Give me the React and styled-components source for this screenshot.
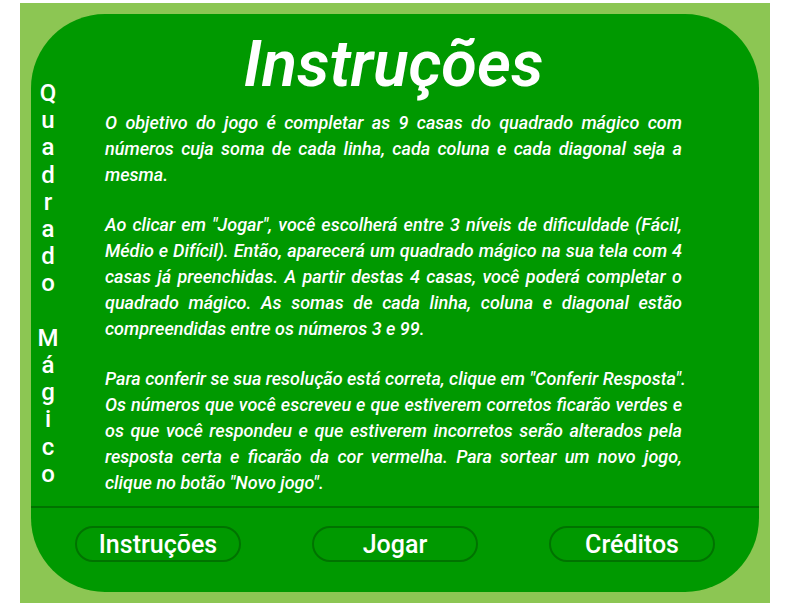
import React from "react";
import styled, { createGlobalStyle } from "styled-components";

const GlobalStyle = createGlobalStyle`
  * { box-sizing: border-box; }
  html, body, #root { height: 100%; }
  body {
    margin: 0;
    background: #ffffff;
    color: #ffffff;
    font-family: Roboto, "Liberation Sans", sans-serif;
    font-weight: 500;
  }
`;

const Page = styled.div`
  display: flex;
  min-height: 100%;
  padding: 3px 15px 1px 20px;
`;

const Frame = styled.div`
  display: flex;
  flex: 1;
  min-width: 0;
  padding: 11px;
  background: #8cc653;
`;

const Panel = styled.div`
  display: flex;
  flex: 1;
  flex-direction: column;
  min-width: 0;
  border-radius: 74px;
  background: #009900;
`;

const Body = styled.div`
  display: grid;
  flex: 1;
  grid-template-columns: 34px minmax(0, 1fr);
  border-bottom: 2px solid #007300;
`;

const SideTitle = styled.div`
  display: flex;
  flex-direction: column;
  margin: 66px 0 18px;
  font-size: 24px;
  line-height: 27px;
  text-align: center;
`;

const Letter = styled.span`
  flex: 1;
`;

const Content = styled.main`
  padding: 14px 77px 8px 40px;
`;

const Title = styled.h1`
  margin: 0 0 10px;
  font-size: 65px;
  font-style: italic;
  font-weight: 600;
  line-height: 72px;
  text-align: center;
`;

const Instructions = styled.div`
  display: grid;
  grid-template-columns: minmax(0, 1fr);
  gap: 24px;
  font-size: 18px;
  font-style: italic;
  line-height: 26px;
`;

const Paragraph = styled.p`
  margin: 0;
`;

const Line = styled.span`
  display: block;
  text-align-last: justify;
  white-space: nowrap;

  &:last-child { text-align-last: left; }
`;

const Menu = styled.nav`
  display: flex;
  justify-content: space-between;
  padding: 18px 44px 30px;
`;

const MenuButton = styled.button`
  width: 166px;
  height: 36px;
  padding: 2px 0 0;
  border: 2px solid #007300;
  border-radius: 20px;
  background: transparent;
  color: inherit;
  font: inherit;
  font-size: 25px;
  line-height: 30px;
  cursor: pointer;
`;

const name = "Quadrado Mágico";

const paragraphs = [
  [
    "O objetivo do jogo é completar as 9 casas do quadrado mágico com",
    "números cuja soma de cada linha, cada coluna e cada diagonal seja a",
    "mesma.",
  ],
  [
    'Ao clicar em "Jogar", você escolherá entre 3 níveis de dificuldade (Fácil,',
    "Médio e Difícil). Então, aparecerá um quadrado mágico na sua tela com 4",
    "casas já preenchidas. A partir destas 4 casas, você poderá completar o",
    "quadrado mágico. As somas de cada linha, coluna e diagonal estão",
    "compreendidas entre os números 3 e 99.",
  ],
  [
    'Para conferir se sua resolução está correta, clique em "Conferir Resposta".',
    "Os números que você escreveu e que estiverem corretos ficarão verdes e",
    "os que você respondeu e que estiverem incorretos serão alterados pela",
    "resposta certa e ficarão da cor vermelha. Para sortear um novo jogo,",
    'clique no botão "Novo jogo".',
  ],
];

const menu = ["Instruções", "Jogar", "Créditos"];

export default function App() {
  return (
    <>
      <GlobalStyle />
      <Page>
        <Frame>
          <Panel>
            <Body>
              <SideTitle>
                {[...name].map((letter, i) => (
                  <Letter key={i}>{letter}</Letter>
                ))}
              </SideTitle>
              <Content>
                <Title>Instruções</Title>
                <Instructions>
                  {paragraphs.map((lines) => (
                    <Paragraph key={lines[0]}>
                      {lines.map((line) => (
                        <Line key={line}>{line} </Line>
                      ))}
                    </Paragraph>
                  ))}
                </Instructions>
              </Content>
            </Body>
            <Menu>
              {menu.map((label) => (
                <MenuButton key={label} type="button">{label}</MenuButton>
              ))}
            </Menu>
          </Panel>
        </Frame>
      </Page>
    </>
  );
}
